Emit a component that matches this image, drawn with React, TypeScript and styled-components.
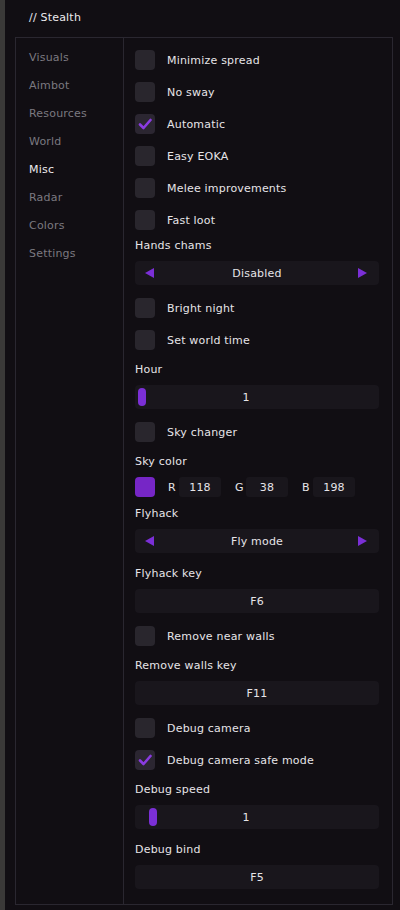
import React from 'react';
import styled, { createGlobalStyle } from 'styled-components';

const Global = createGlobalStyle`
  html, body {
    margin: 0;
    padding: 0;
    background: #3a3938;
  }
  body {
    font-family: "DejaVu Sans", "Liberation Sans", sans-serif;
    font-size: 11px;
    letter-spacing: 0.2px;
    color: #e6e4e8;
  }
`;

const Window = styled.div`
  margin-left: 5px;
  width: 395px;
  height: 910px;
  background: #110e13;
  box-sizing: border-box;
  padding: 11px 7px 5px 10px;
  display: flex;
  flex-direction: column;
`;

const Title = styled.div`
  padding-left: 14px;
  height: 26px;
  font-size: 11px;
  color: #eceaee;
`;

const Panel = styled.div`
  flex: 1;
  display: flex;
  border: 1px solid #2a2730;
`;

const Sidebar = styled.nav`
  width: 108px;
  border-right: 1px solid #2a2730;
  display: flex;
  flex-direction: column;
  padding: 13px 0 0 13px;
  box-sizing: border-box;
  gap: 14px;
`;

const Tab = styled.div<{ $active?: boolean }>`
  height: 14px;
  line-height: 14px;
  color: ${(p) => (p.$active ? '#ecebee' : '#7b7980')};
`;

const Content = styled.div`
  flex: 1;
  padding: 12px 13px 0 11px;
  display: flex;
  flex-direction: column;
`;

const Row = styled.div`
  display: flex;
  align-items: center;
  height: 20px;
  margin-bottom: 12px;
`;

const Box = styled.div<{ $checked?: boolean }>`
  width: 20px;
  height: 20px;
  border-radius: 4px;
  background: ${(p) => (p.$checked ? '#2b2631' : '#29262d')};
  display: flex;
  align-items: center;
  justify-content: center;
  margin-right: 12px;
`;

const ColorRow = styled.div`
  display: flex;
  align-items: center;
  height: 20px;
  margin-bottom: 9px;
`;

const Label = styled.div<{ $top?: number }>`
  height: 14px;
  line-height: 14px;
  margin-top: ${(p) => p.$top ?? 1}px;
  margin-bottom: 8px;
  color: #e6e4e8;
`;

const Field = styled.div<{ $slider?: boolean }>`
  position: relative;
  height: 24px;
  border-radius: 4px;
  background: #19161c;
  display: flex;
  align-items: center;
  justify-content: center;
  box-sizing: border-box;
  padding-right: ${(p) => (p.$slider ? 22 : 0)}px;
  margin-bottom: 13px;
`;

const Arrow = styled.svg<{ $side: 'left' | 'right' }>`
  position: absolute;
  top: 7px;
  ${(p) => (p.$side === 'left' ? 'left: 10px;' : 'right: 12px;')}
`;

const Thumb = styled.div<{ $offset: number }>`
  position: absolute;
  top: 3px;
  left: ${(p) => p.$offset}px;
  width: 8px;
  height: 18px;
  border-radius: 4px;
  background: #7b2fd6;
`;

const Swatch = styled.div`
  width: 20px;
  height: 20px;
  border-radius: 4px;
  background: #7626c6;
  margin-right: 13px;
`;

const Channel = styled.span`
  width: 11px;
  color: #e6e4e8;
`;

const Num = styled.div`
  width: 42px;
  height: 20px;
  border-radius: 3px;
  background: #19161c;
  display: flex;
  align-items: center;
  justify-content: center;
  margin-right: 14px;
`;

const Check = () => (
  <svg width="14" height="12" viewBox="0 0 14 12">
    <path d="M2 6.5 L5.5 10 L12.5 2" fill="none" stroke="#8a3be0" strokeWidth="2.6" strokeLinecap="round" strokeLinejoin="round" />
  </svg>
);

const Toggle = ({ text, checked }: { text: string; checked?: boolean }) => (
  <Row>
    <Box $checked={checked}>{checked && <Check />}</Box>
    {text}
  </Row>
);

const Combo = ({ value }: { value: string }) => (
  <Field>
    <Arrow $side="left" width="9" height="10" viewBox="0 0 9 10">
      <path d="M9 0 L0 5 L9 10 Z" fill="#7b2fd6" />
    </Arrow>
    {value}
    <Arrow $side="right" width="9" height="10" viewBox="0 0 9 10">
      <path d="M0 0 L9 5 L0 10 Z" fill="#7b2fd6" />
    </Arrow>
  </Field>
);

const Slider = ({ value, offset }: { value: string; offset: number }) => (
  <Field $slider>
    <Thumb $offset={offset} />
    {value}
  </Field>
);

const tabs = ['Visuals', 'Aimbot', 'Resources', 'World', 'Misc', 'Radar', 'Colors', 'Settings'];

export default function App() {
  return (
    <>
      <Global />
      <Window>
        <Title>// Stealth</Title>
        <Panel>
          <Sidebar>
            {tabs.map((t) => (
              <Tab key={t} $active={t === 'Misc'}>
                {t}
              </Tab>
            ))}
          </Sidebar>
          <Content>
            <Toggle text="Minimize spread" />
            <Toggle text="No sway" />
            <Toggle text="Automatic" checked />
            <Toggle text="Easy EOKA" />
            <Toggle text="Melee improvements" />
            <Toggle text="Fast loot" />
            <Label $top={-3}>Hands chams</Label>
            <Combo value="Disabled" />
            <Toggle text="Bright night" />
            <Toggle text="Set world time" />
            <Label>Hour</Label>
            <Slider value="1" offset={3} />
            <Toggle text="Sky changer" />
            <Label>Sky color</Label>
            <ColorRow>
              <Swatch />
              <Channel>R</Channel>
              <Num>118</Num>
              <Channel>G</Channel>
              <Num>38</Num>
              <Channel>B</Channel>
              <Num>198</Num>
            </ColorRow>
            <Label>Flyhack</Label>
            <Combo value="Fly mode" />
            <Label>Flyhack key</Label>
            <Field>F6</Field>
            <Toggle text="Remove near walls" />
            <Label>Remove walls key</Label>
            <Field>F11</Field>
            <Toggle text="Debug camera" />
            <Toggle text="Debug camera safe mode" checked />
            <Label>Debug speed</Label>
            <Slider value="1" offset={14} />
            <Label>Debug bind</Label>
            <Field>F5</Field>
          </Content>
        </Panel>
      </Window>
    </>
  );
}
